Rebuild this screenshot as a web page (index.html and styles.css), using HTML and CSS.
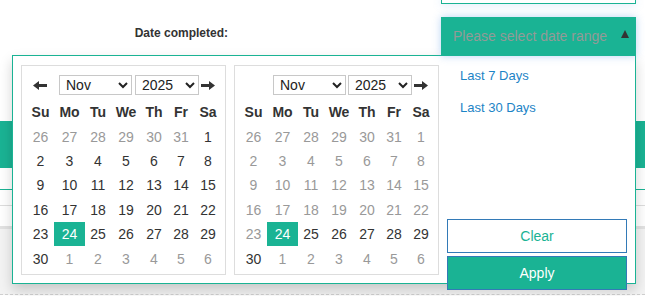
FILE: index.html
```html
<!DOCTYPE html>
<html lang="en">

<head>
  <meta charset="UTF-8">
  <meta name="viewport" content="width=device-width, initial-scale=1.0">
  <title>Date completed</title>
  <link rel="stylesheet" href="styles.css">
</head>

<body>
  <div class="page">
    <div class="top-field"></div>

    <div class="filter-row">
      <label class="filter-label">Date completed:</label>
      <div class="range-picker">
        <div class="range-toggle">
          <span class="range-placeholder">Please select date range</span>
          <span class="caret-up"></span>
        </div>

        <div class="range-popup">
          <!-- left calendar -->
          <div class="cal">
            <div class="cal-head">
              <span class="nav prev">
                <svg width="15" height="9" viewBox="0 0 15 9"><path d="M0 4.5 L6 0 L6 3 L14 3 L14 6 L6 6 L6 9 Z" fill="#333"/></svg>
              </span>
              <span class="pick pick-month">
                <select><option>Nov</option></select>
                <svg class="chev" width="10" height="7" viewBox="0 0 10 7"><path d="M1 1 L5 5 L9 1" fill="none" stroke="#222" stroke-width="2"/></svg>
              </span>
              <span class="pick pick-year">
                <select><option>2025</option></select>
                <svg class="chev" width="10" height="7" viewBox="0 0 10 7"><path d="M1 1 L5 5 L9 1" fill="none" stroke="#222" stroke-width="2"/></svg>
              </span>
              <span class="nav next">
                <svg width="15" height="9" viewBox="0 0 15 9"><path d="M15 4.5 L9 0 L9 3 L1 3 L1 6 L9 6 L9 9 Z" fill="#333"/></svg>
              </span>
            </div>
            <table class="days">
              <colgroup><col class="c-su"><col class="c-mo"><col class="c-tu"><col class="c-we"><col class="c-th"><col class="c-fr"><col class="c-sa"></colgroup>
              <tr><th>Su</th><th>Mo</th><th>Tu</th><th>We</th><th>Th</th><th>Fr</th><th>Sa</th></tr>
              <tr><td class="off">26</td><td class="off">27</td><td class="off">28</td><td class="off">29</td><td class="off">30</td><td class="off">31</td><td>1</td></tr>
              <tr><td>2</td><td>3</td><td>4</td><td>5</td><td>6</td><td>7</td><td>8</td></tr>
              <tr><td>9</td><td>10</td><td>11</td><td>12</td><td>13</td><td>14</td><td>15</td></tr>
              <tr><td>16</td><td>17</td><td>18</td><td>19</td><td>20</td><td>21</td><td>22</td></tr>
              <tr><td>23</td><td class="active">24</td><td>25</td><td>26</td><td>27</td><td>28</td><td>29</td></tr>
              <tr><td>30</td><td class="off">1</td><td class="off">2</td><td class="off">3</td><td class="off">4</td><td class="off">5</td><td class="off">6</td></tr>
            </table>
          </div>

          <!-- right calendar -->
          <div class="cal">
            <div class="cal-head cal-head-end">
              <span class="pick pick-month">
                <select><option>Nov</option></select>
                <svg class="chev" width="10" height="7" viewBox="0 0 10 7"><path d="M1 1 L5 5 L9 1" fill="none" stroke="#222" stroke-width="2"/></svg>
              </span>
              <span class="pick pick-year">
                <select><option>2025</option></select>
                <svg class="chev" width="10" height="7" viewBox="0 0 10 7"><path d="M1 1 L5 5 L9 1" fill="none" stroke="#222" stroke-width="2"/></svg>
              </span>
              <span class="nav next">
                <svg width="15" height="9" viewBox="0 0 15 9"><path d="M15 4.5 L9 0 L9 3 L1 3 L1 6 L9 6 L9 9 Z" fill="#333"/></svg>
              </span>
            </div>
            <table class="days">
              <colgroup><col class="c-su"><col class="c-mo"><col class="c-tu"><col class="c-we"><col class="c-th"><col class="c-fr"><col class="c-sa"></colgroup>
              <tr><th>Su</th><th>Mo</th><th>Tu</th><th>We</th><th>Th</th><th>Fr</th><th>Sa</th></tr>
              <tr><td class="off">26</td><td class="off">27</td><td class="off">28</td><td class="off">29</td><td class="off">30</td><td class="off">31</td><td class="off">1</td></tr>
              <tr><td class="off">2</td><td class="off">3</td><td class="off">4</td><td class="off">5</td><td class="off">6</td><td class="off">7</td><td class="off">8</td></tr>
              <tr><td class="off">9</td><td class="off">10</td><td class="off">11</td><td class="off">12</td><td class="off">13</td><td class="off">14</td><td class="off">15</td></tr>
              <tr><td class="off">16</td><td class="off">17</td><td class="off">18</td><td class="off">19</td><td class="off">20</td><td class="off">21</td><td class="off">22</td></tr>
              <tr><td class="off">23</td><td class="active">24</td><td>25</td><td>26</td><td>27</td><td>28</td><td>29</td></tr>
              <tr><td>30</td><td class="off">1</td><td class="off">2</td><td class="off">3</td><td class="off">4</td><td class="off">5</td><td class="off">6</td></tr>
            </table>
          </div>

          <!-- ranges -->
          <div class="ranges">
            <ul>
              <li><a href="javascript:;">Last 7 Days</a></li>
              <li><a href="javascript:;">Last 30 Days</a></li>
            </ul>
            <div class="range-btns">
              <button class="btn btn-clear">Clear</button>
              <button class="btn btn-apply">Apply</button>
            </div>
          </div>
        </div>
      </div>
    </div>

    <div class="band"></div>
    <div class="rule-green"></div>
    <div class="rule-gray"></div>
    <div class="footer-area"></div>
  </div>
</body>

</html>
```

FILE: styles.css
```css
html,
body {
  margin: 0;
  padding: 0;
  background: #fff;
}

body {
  font-family: "Liberation Sans", Arial, sans-serif;
  color: #333;
}

ul {
  list-style: none;
  margin: 0;
  padding: 0;
}

.page {
  width: 645px;
  height: 296px;
  overflow: hidden;
  display: flex;
  flex-direction: column;
}

.top-field {
  margin-left: 441px;
  width: 195px;
  height: 4px;
  box-sizing: border-box;
  border: 1px solid #1ab394;
  border-top: 0;
  box-shadow: 0 0 8px rgba(102, 160, 233, 0.35);
}

.filter-row {
  display: flex;
  margin-top: 13px;
  height: 39px;
}

.filter-label {
  width: 228px;
  text-align: right;
  font-size: 12px;
  font-weight: bold;
  line-height: 14px;
  padding-top: 9px;
  box-sizing: border-box;
}

.range-picker {
  margin-left: 213px;
  width: 195px;
  height: 39px;
  position: relative;
  z-index: 5;
}

.range-toggle {
  position: relative;
  z-index: 2;
  height: 39px;
  background: #1ab394;
  display: flex;
  justify-content: space-between;
  padding: 0 7px 0 12px;
  box-shadow: 0 0 8px rgba(102, 160, 233, 0.45);
}

.range-placeholder {
  font-size: 14px;
  line-height: 39px;
  color: #939a97;
}

.caret-up {
  margin-top: 13px;
  width: 0;
  height: 0;
  border-left: 4px solid transparent;
  border-right: 4px solid transparent;
  border-bottom: 8px solid #333;
}

.range-popup {
  position: absolute;
  top: 38px;
  right: 0;
  width: 624px;
  height: 229px;
  box-sizing: border-box;
  border: 1px solid #1ab394;
  background: #fff;
  box-shadow: 0 6px 12px rgba(0, 0, 0, 0.18);
  display: flex;
  padding: 9px 0 0 8px;
  gap: 8px;
}

.cal {
  width: 205px;
  height: 210px;
  box-sizing: border-box;
  border: 1px solid #ddd;
  padding: 9px 4px 3px 5px;
}

.cal-head {
  display: flex;
  align-items: center;
  height: 20px;
  padding: 0 6px;
  margin-bottom: 5px;
}

.cal-head-end {
  justify-content: flex-end;
}

.nav {
  display: flex;
  width: 15px;
}

.prev {
  margin-right: 11px;
}

.next {
  margin-left: 1px;
}

.pick {
  position: relative;
  display: block;
  height: 20px;
}

.pick-month {
  width: 73px;
  margin-right: 3px;
}

.cal-head-end .pick-month {
  margin-right: 2px;
}

.pick-year {
  width: 64px;
}

.pick select {
  appearance: none;
  -webkit-appearance: none;
  width: 100%;
  height: 20px;
  box-sizing: border-box;
  border: 1px solid #c8c8c8;
  border-radius: 0;
  background: #fff;
  font-family: "Liberation Sans", Arial, sans-serif;
  font-size: 14px;
  color: #222;
  padding: 0 0 0 6px;
  margin: 0;
}

.chev {
  position: absolute;
  right: 4px;
  top: 7px;
}

.days {
  border-collapse: collapse;
  table-layout: fixed;
  width: 194px;
}

.c-su { width: 27px; }
.c-mo { width: 31px; }
.c-tu { width: 26px; }
.c-we { width: 30px; }
.c-th { width: 26px; }
.c-fr { width: 28px; }
.c-sa { width: 26px; }

.days th,
.days td {
  padding: 0;
  height: 24.4px;
  text-align: center;
  font-size: 14px;
  line-height: 24px;
  color: #333;
}

.days th {
  font-weight: bold;
}

.days td.off {
  color: #999;
}

.days td.active {
  background: #1ab394;
  color: #fff;
}

.ranges {
  width: 196px;
  margin-left: -8px;
  margin-top: -9px;
}

.ranges ul {
  padding: 4px 0 0 21px;
}

.ranges li {
  height: 32px;
  line-height: 32px;
  font-size: 13px;
}

.ranges a {
  color: #1c84c6;
  text-decoration: none;
}

.range-btns {
  margin: 95px 0 0 8px;
  width: 180px;
  display: flex;
  flex-direction: column;
  gap: 3px;
}

.btn {
  height: 34px;
  box-sizing: border-box;
  border: 1px solid #337ab7;
  font-family: "Liberation Sans", Arial, sans-serif;
  font-size: 14px;
  padding: 0;
  margin: 0;
}

.btn-clear {
  background: #fff;
  color: #1ab394;
}

.btn-apply {
  background: #1ab394;
  color: #fff;
}

.band {
  margin-top: 65px;
  height: 47px;
  background: #1ab394;
}

.rule-green {
  margin-top: 21px;
  height: 1px;
  background: #1ab394;
}

.rule-gray {
  margin-top: 15px;
  height: 1px;
  background: #ddd;
}

.footer-area {
  margin-top: 20px;
  flex: 1;
  border-top: 3px solid #e2e2e2;
  background: #f3f3f3;
  border-bottom: 1px dashed #cfcfcf;
  margin-bottom: 1px;
}
```
